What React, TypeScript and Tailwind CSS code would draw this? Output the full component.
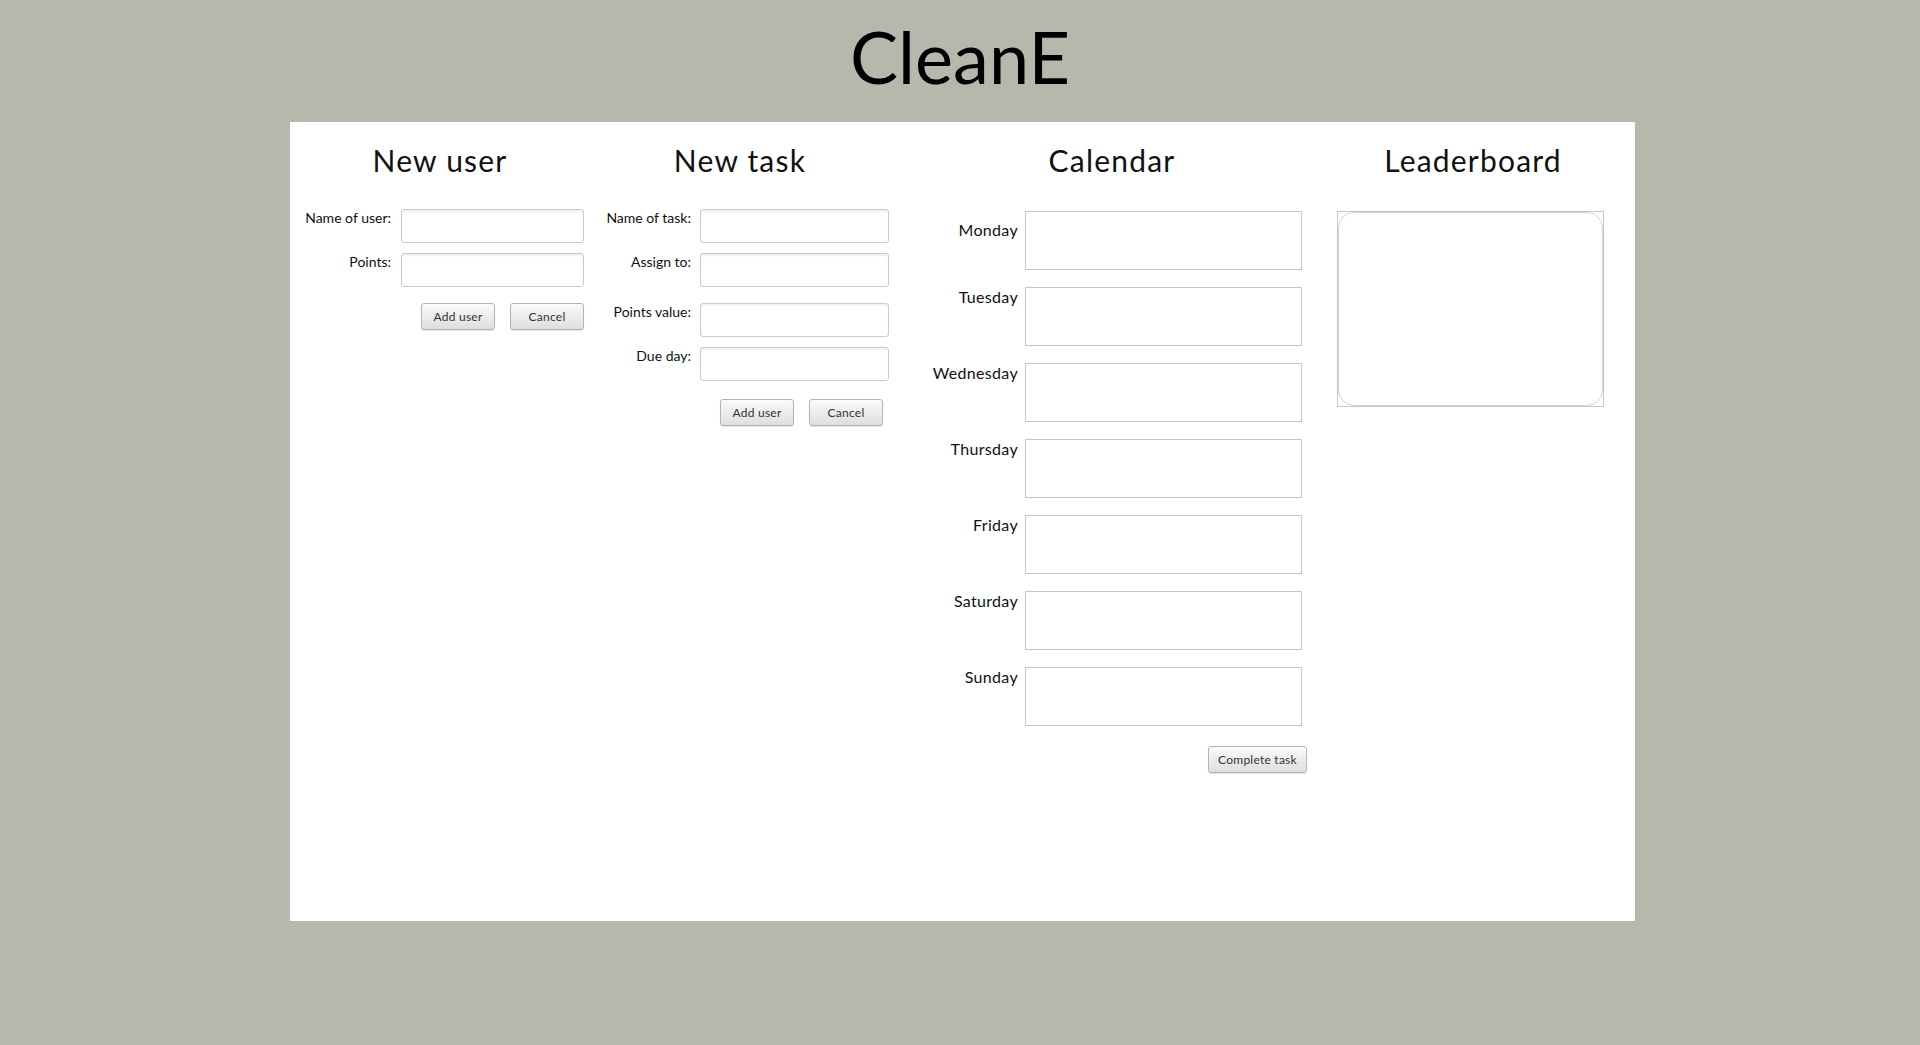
const font = { fontFamily: "Lato, 'Open Sans', sans-serif" };

const inputCls =
  'h-[34px] rounded-[3px] border border-[#c9c9c9] bg-white shadow-[inset_0_2px_2px_rgba(0,0,0,0.06)]';

const btnCls =
  'h-[27px] w-[74px] rounded-[3px] border border-[#b4b4b4] bg-gradient-to-b from-[#fbfbfb] to-[#dedede] text-[12px] tracking-[0.02em] text-[#333] shadow-[0_1px_1px_rgba(0,0,0,0.12)]';

const days = ['Monday', 'Tuesday', 'Wednesday', 'Thursday', 'Friday', 'Saturday', 'Sunday'];

function Heading({ children }: { children: string }) {
  return (
    <h2 className="mt-[23px] text-center text-[30px] leading-[30px] tracking-[0.04em] text-[#111]">
      {children}
    </h2>
  );
}

function Field({ label, width }: { label: string; width: string }) {
  return (
    <>
      <label className="mt-[1px] whitespace-nowrap text-right text-[14px] leading-[16px] text-[#111]">
        {label}
      </label>
      <input className={`${inputCls} ${width}`} />
    </>
  );
}

export default function App() {
  return (
    <div className="min-h-[1045px] bg-[#b5b8aa] pt-[20px]" style={font}>
      <h1 className="h-[72px] text-center text-[72px] leading-[72px] text-black">CleanE</h1>

      <main className="mt-[30px] ml-[290px] flex h-[799px] w-[1345px] bg-white">
        {/* new user */}
        <section className="w-[300px]">
          <Heading>New user</Heading>
          <div className="mt-[34px] grid grid-cols-[91px_183px] gap-x-[10px] gap-y-[10px] pl-[10px]">
            <Field label="Name of user:" width="w-[183px]" />
            <Field label="Points:" width="w-[183px]" />
          </div>
          <div className="mt-[16px] flex justify-end gap-[15px] pr-[6px]">
            <button className={btnCls}>Add user</button>
            <button className={btnCls}>Cancel</button>
          </div>
        </section>

        {/* new task */}
        <section className="w-[300px]">
          <Heading>New task</Heading>
          <div className="mt-[34px] grid grid-cols-[89px_189px] gap-x-[9px] pl-[12px]">
            <Field label="Name of task:" width="w-[189px]" />
            <div className="col-span-2 h-[10px]" />
            <Field label="Assign to:" width="w-[189px]" />
            <div className="col-span-2 h-[16px]" />
            <Field label="Points value:" width="w-[189px]" />
            <div className="col-span-2 h-[10px]" />
            <Field label="Due day:" width="w-[189px]" />
          </div>
          <div className="mt-[18px] flex gap-[15px] pl-[130px]">
            <button className={btnCls}>Add user</button>
            <button className={btnCls}>Cancel</button>
          </div>
        </section>

        {/* calendar */}
        <section className="w-[444px]">
          <Heading>Calendar</Heading>
          <div className="mt-[36px] flex flex-col gap-[17px]">
            {days.map((d, i) => (
              <div key={d} className="flex gap-[7px]">
                <span
                  className={`w-[128px] text-right text-[16px] leading-[20px] tracking-[0.02em] text-[#111] ${i === 0 ? 'pt-[9px]' : 'pt-0'}`}
                >
                  {d}
                </span>
                <div className="h-[59px] w-[277px] border border-[#c6c6c6]" />
              </div>
            ))}
          </div>
          <div className="mt-[20px] flex justify-end pr-[27px]">
            <button className={`${btnCls} h-[26px] w-[99px]`}>Complete task</button>
          </div>
        </section>

        {/* leaderboard */}
        <section className="w-[278px]">
          <Heading>Leaderboard</Heading>
          <div className="mt-[36px] ml-[3px] h-[196px] w-[267px] border border-[#c4c8bf]">
            <div className="h-full w-full rounded-[16px] border border-[#d4d6d2]" />
          </div>
        </section>
      </main>
    </div>
  );
}
